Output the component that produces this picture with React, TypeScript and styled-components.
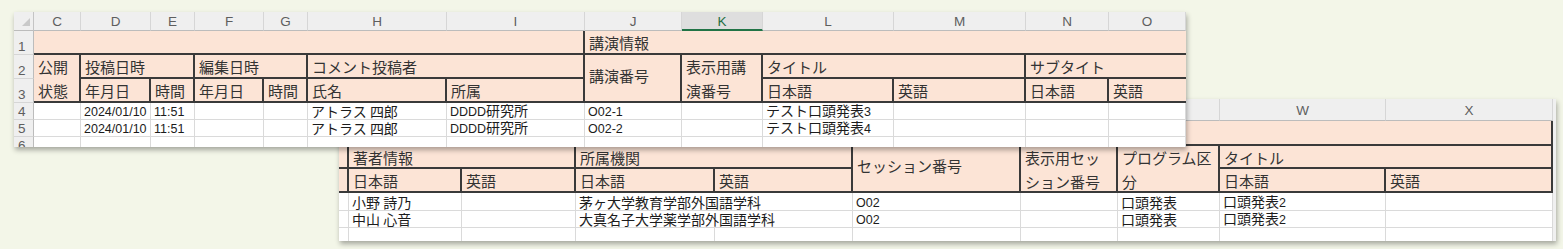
import React from 'react';
import styled, { createGlobalStyle, css } from 'styled-components';

const Global = createGlobalStyle`
  html, body { margin: 0; padding: 0; background: #f3f6e8; }
  body { width: 1563px; height: 249px; overflow: hidden; }
  * { box-sizing: border-box; }
`;

const CJK = `"Noto Sans CJK JP", "Liberation Sans", sans-serif`;
const LAT = `"Liberation Sans", "Noto Sans CJK JP", sans-serif`;
const DARK = '#3a3a3a';
const PEACH = '#fce4d6';
const GRID = '#dadada';

const Canvas = styled.div`
  position: relative;
  width: 1563px;
  height: 249px;
  background: #f3f6e8;
  overflow: hidden;
`;

const Window = styled.div<{ $x: number; $y: number; $w: number; $h: number; $z: number }>`
  position: absolute;
  left: ${(p) => p.$x}px;
  top: ${(p) => p.$y}px;
  width: ${(p) => p.$w}px;
  height: ${(p) => p.$h}px;
  z-index: ${(p) => p.$z};
  background: #fff;
  overflow: hidden;
  box-shadow: 1px 3px 5px rgba(0, 0, 0, 0.32);
`;

const Sheet = styled.div<{ $cols: number[]; $rows: number[] }>`
  display: grid;
  grid-template-columns: ${(p) => p.$cols.map((c) => `${c}px`).join(' ')};
  grid-template-rows: ${(p) => p.$rows.map((r) => `${r}px`).join(' ')};
`;

type Place = { $c: number; $r: number; $cs?: number; $rs?: number };

const place = css<Place>`
  grid-column: ${(p) => `${p.$c} / span ${p.$cs ?? 1}`};
  grid-row: ${(p) => `${p.$r} / span ${p.$rs ?? 1}`};
  min-width: 0;
`;

const Corner = styled.div<Place>`
  ${place};
  background: #efefef;
  border-right: 1px solid #c4c4c4;
  border-bottom: 1px solid #bcbcbc;
  display: flex;
  align-items: flex-end;
  justify-content: flex-end;
  padding: 0 3px 4px 0;
`;

const Tri = styled.span`
  width: 0;
  height: 0;
  border-left: 8px solid transparent;
  border-bottom: 8px solid #c9c9c9;
`;

const ColHead = styled.div<Place & { $sel?: boolean }>`
  ${place};
  overflow: hidden;
  background: ${(p) => (p.$sel ? '#dedede' : '#efefef')};
  border-right: 1px solid #d6d6d6;
  border-bottom: ${(p) => (p.$sel ? '2px solid #217346' : '1px solid #bcbcbc')};
  color: ${(p) => (p.$sel ? '#1f6e43' : '#5e5e5e')};
  font-family: ${LAT};
  font-size: 13.5px;
  display: flex;
  align-items: center;
  justify-content: center;
  padding-top: 1px;
`;

const RowHead = styled.div<Place>`
  ${place};
  background: #efefef;
  border-right: 1px solid #bcbcbc;
  border-bottom: 1px solid #d6d6d6;
  color: #5e5e5e;
  font-family: ${LAT};
  font-size: 13.5px;
  line-height: 16px;
  display: flex;
  align-items: flex-start;
  padding-left: 4px;
`;

const RowNum = styled.span<{ $tall: boolean }>`
  margin-top: ${(p) => (p.$tall ? 8 : 1)}px;
`;

const HeadCell = styled.div<Place & { $right?: boolean; $mid?: boolean }>`
  ${place};
  overflow: hidden;
  background: ${PEACH};
  border-right: ${(p) => (p.$right === false ? 'none' : `2px solid ${DARK}`)};
  border-bottom: 2px solid ${DARK};
  color: #333;
  font-family: ${CJK};
  font-size: 15px;
  line-height: 24px;
  white-space: pre-line;
  padding: 0 3px 0 4px;
  display: flex;
  flex-direction: column;
  justify-content: ${(p) => (p.$mid ? 'center' : 'flex-start')};
  padding-bottom: ${(p) => (p.$mid ? 5 : 0)}px;
`;

const StripCell = styled.div<Place>`
  ${place};
  background: #f0f0f0;
`;

const DataCell = styled.div<Place>`
  ${place};
  background: #fff;
  border-right: 1px solid ${GRID};
  border-bottom: 1px solid ${GRID};
  color: #1c1c1c;
  font-family: ${CJK};
  font-size: 14px;
  line-height: 16px;
  white-space: nowrap;
  padding-left: 3px;
  display: flex;
  align-items: center;
`;

const Content = styled.span`
  display: block;
`;

const Latin = styled.span`
  font-family: ${LAT};
  font-size: 12.5px;
`;

function Txt({ s }: { s: string }) {
  const parts = s.match(/[\x20-\x7e]+|[^\x20-\x7e]+/g) || [];
  return (
    <Content>
      {parts.map((p, i) =>
        /^[\x20-\x7e]+$/.test(p) && p.trim() !== '' ? (
          <Latin key={i}>{p}</Latin>
        ) : (
          <React.Fragment key={i}>{p}</React.Fragment>
        )
      )}
    </Content>
  );
}

type HSpec = { c: number; r: number; cs?: number; rs?: number; t: string; right?: boolean; mid?: boolean };
type DSpec = { c: number; cs?: number; t: string };

/* ---------- Window 1 ---------- */
const W1_COLS = [20, 47, 70, 44, 69, 44, 139, 138, 97, 81, 131, 132, 83, 77];
const W1_ROWS = [19, 24, 24, 24, 17, 17, 17];
const W1_LETTERS = ['C', 'D', 'E', 'F', 'G', 'H', 'I', 'J', 'K', 'L', 'M', 'N', 'O'];

const W1_HEAD: HSpec[] = [
  { c: 2, r: 2, cs: 7, t: '' },
  { c: 9, r: 2, cs: 6, t: '講演情報', right: false },
  { c: 2, r: 3, rs: 2, t: '公開\n状態' },
  { c: 3, r: 3, cs: 2, t: '投稿日時' },
  { c: 5, r: 3, cs: 2, t: '編集日時' },
  { c: 7, r: 3, cs: 2, t: 'コメント投稿者' },
  { c: 9, r: 3, rs: 2, t: '講演番号', mid: true },
  { c: 10, r: 3, rs: 2, t: '表示用講\n演番号' },
  { c: 11, r: 3, cs: 2, t: 'タイトル' },
  { c: 13, r: 3, cs: 2, t: 'サブタイト', right: false },
  { c: 3, r: 4, t: '年月日' },
  { c: 4, r: 4, t: '時間' },
  { c: 5, r: 4, t: '年月日' },
  { c: 6, r: 4, t: '時間' },
  { c: 7, r: 4, t: '氏名' },
  { c: 8, r: 4, t: '所属' },
  { c: 11, r: 4, t: '日本語' },
  { c: 12, r: 4, t: '英語' },
  { c: 13, r: 4, t: '日本語' },
  { c: 14, r: 4, t: '英語', right: false },
];

const w1Row = (code: string, title: string): DSpec[] => [
  { c: 2, t: '' },
  { c: 3, t: '2024/01/10' },
  { c: 4, t: '11:51' },
  { c: 5, t: '' },
  { c: 6, t: '' },
  { c: 7, t: 'アトラス 四郎' },
  { c: 8, t: 'DDDD研究所' },
  { c: 9, t: code },
  { c: 10, t: '' },
  { c: 11, t: title },
  { c: 12, t: '' },
  { c: 13, t: '' },
  { c: 14, t: '' },
];
const blank = (cols: number[]): DSpec[] => cols.map((c) => ({ c, t: '' }));

const W1_DATA: DSpec[][] = [
  w1Row('O02-1', 'テスト口頭発表3'),
  w1Row('O02-2', 'テスト口頭発表4'),
  blank([2, 3, 4, 5, 6, 7, 8, 9, 10, 11, 12, 13, 14]),
];

/* ---------- Window 2 ---------- */
const W2_COLS = [10, 113, 114, 139, 138, 168, 97, 102, 166, 167, 3];
const W2_ROWS = [22, 25, 23, 24, 18, 17, 17];
const W2_LETTERS = ['', 'P', 'Q', 'R', 'S', 'T', 'U', 'V', 'W', 'X'];

const W2_HEAD: HSpec[] = [
  { c: 1, r: 2, cs: 10, t: '' },
  { c: 1, r: 3, t: '' },
  { c: 1, r: 4, t: '' },
  { c: 2, r: 3, cs: 2, t: '著者情報' },
  { c: 4, r: 3, cs: 2, t: '所属機関' },
  { c: 6, r: 3, rs: 2, t: 'セッション番号', mid: true },
  { c: 7, r: 3, rs: 2, t: '表示用セッ\nション番号' },
  { c: 8, r: 3, rs: 2, t: 'プログラム区\n分' },
  { c: 9, r: 3, cs: 2, t: 'タイトル' },
  { c: 2, r: 4, t: '日本語' },
  { c: 3, r: 4, t: '英語' },
  { c: 4, r: 4, t: '日本語' },
  { c: 5, r: 4, t: '英語' },
  { c: 9, r: 4, t: '日本語' },
  { c: 10, r: 4, t: '英語' },
];

const w2Row = (name: string, org: string): DSpec[] => [
  { c: 1, t: '' },
  { c: 2, t: name },
  { c: 3, t: '' },
  { c: 4, cs: 2, t: org },
  { c: 6, t: 'O02' },
  { c: 7, t: '' },
  { c: 8, t: '口頭発表' },
  { c: 9, t: '口頭発表2' },
  { c: 10, t: '' },
];

const W2_DATA: DSpec[][] = [
  w2Row('小野 詩乃', '茅ヶ大学教育学部外国語学科'),
  w2Row('中山 心音', '大真名子大学薬学部外国語学科'),
  blank([1, 2, 3, 4, 5, 6, 7, 8, 9, 10]),
];

function Heads({ specs }: { specs: HSpec[] }) {
  return (
    <>
      {specs.map((h, i) => (
        <HeadCell key={i} $c={h.c} $r={h.r} $cs={h.cs} $rs={h.rs} $right={h.right} $mid={h.mid}>
          {h.t}
        </HeadCell>
      ))}
    </>
  );
}

function Data({ rows, start }: { rows: DSpec[][]; start: number }) {
  return (
    <>
      {rows.map((row, ri) =>
        row.map((d) => (
          <DataCell key={`${ri}-${d.c}`} $c={d.c} $cs={d.cs} $r={start + ri}>
            {d.t ? <Txt s={d.t} /> : null}
          </DataCell>
        ))
      )}
    </>
  );
}

export default function App() {
  return (
    <>
      <Global />
      <Canvas>
        <Window $x={339} $y={99} $w={1217} $h={142} $z={1}>
          <Sheet $cols={W2_COLS} $rows={W2_ROWS}>
            {W2_LETTERS.map((l, i) => (
              <ColHead key={i} $c={i + 1} $r={1}>
                {l}
              </ColHead>
            ))}
            {W2_ROWS.map((_, i) => (
              <StripCell key={i} $c={11} $r={i + 1} />
            ))}
            <Heads specs={W2_HEAD} />
            <Data rows={W2_DATA} start={5} />
          </Sheet>
        </Window>

        <Window $x={14} $y={12} $w={1172} $h={135} $z={2}>
          <Sheet $cols={W1_COLS} $rows={W1_ROWS}>
            <Corner $c={1} $r={1}>
              <Tri />
            </Corner>
            {W1_LETTERS.map((l, i) => (
              <ColHead key={l} $c={i + 2} $r={1} $sel={l === 'K'}>
                {l}
              </ColHead>
            ))}
            {[1, 2, 3, 4, 5, 6].map((n) => (
              <RowHead key={n} $c={1} $r={n + 1}>
                <RowNum $tall={n <= 3}>{n}</RowNum>
              </RowHead>
            ))}
            <Heads specs={W1_HEAD} />
            <Data rows={W1_DATA} start={5} />
          </Sheet>
        </Window>
      </Canvas>
    </>
  );
}
